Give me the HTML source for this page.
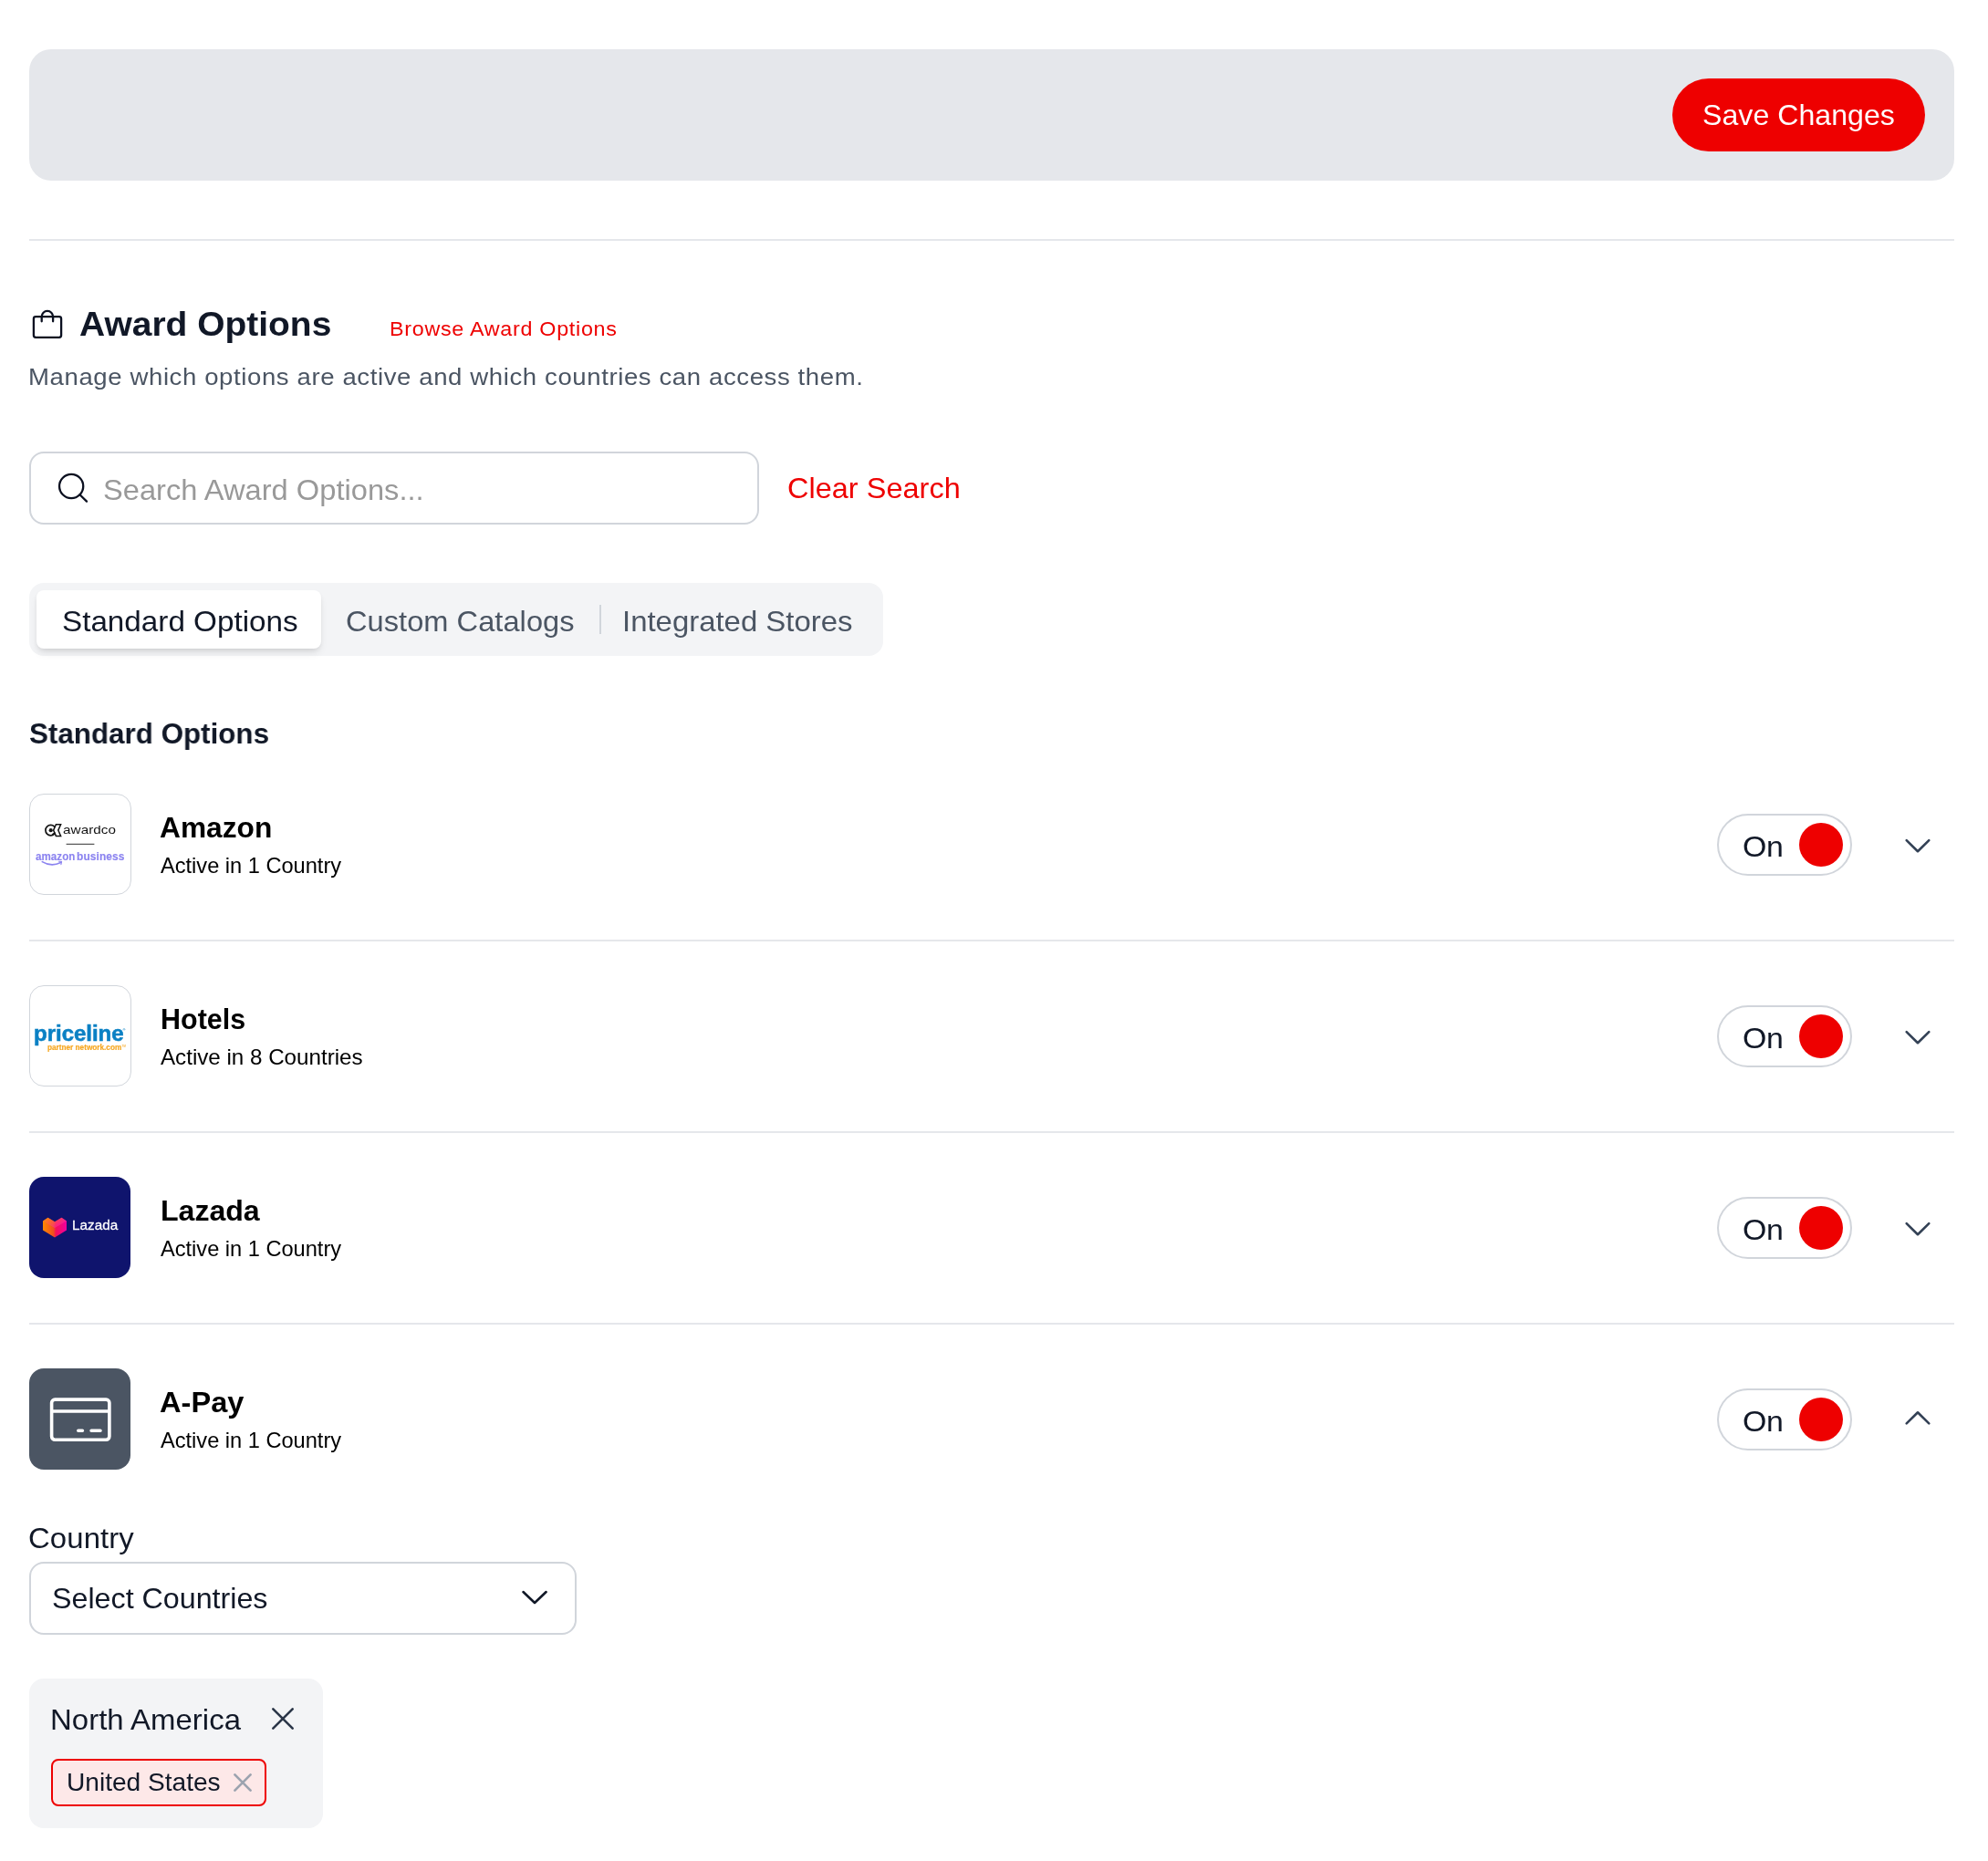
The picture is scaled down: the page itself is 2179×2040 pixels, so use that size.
<!DOCTYPE html>
<html lang="en">
<head>
<meta charset="utf-8">
<title>Award Options</title>
<style>
*{box-sizing:border-box;margin:0;padding:0}
html,body{width:2179px;height:2040px;background:#fff}
body{position:relative;font-family:"Liberation Sans",sans-serif;color:#111827}
.abs{position:absolute}
.t{position:absolute;white-space:pre;display:block;transform-origin:0 0}
.banner{position:absolute;left:32px;top:54px;width:2110px;height:144px;background:#e5e7eb;border-radius:24px}
.savebtn{position:absolute;left:1833px;top:86px;width:277px;height:80px;background:#ee0000;border-radius:40px}
.hr{position:absolute;left:32px;width:2110px;height:2px;background:#e5e7eb}
.search{position:absolute;left:32px;top:495px;width:800px;height:80px;border:2px solid #d1d5db;border-radius:16px;background:#fff}
.tabs{position:absolute;left:32px;top:639px;width:936px;height:80px;background:#f3f4f6;border-radius:16px}
.tab-active{position:absolute;left:40px;top:647px;width:312px;height:64px;background:#fff;border-radius:8px;box-shadow:0 6px 10px -2px rgba(0,0,0,.10),0 2px 5px -1px rgba(0,0,0,.08)}
.tabsep{position:absolute;left:657px;top:663px;width:2px;height:32px;background:#d1d5db}
.tile{position:absolute;left:32px;width:112px;height:111px;border-radius:16px;overflow:hidden}
.tile.b{border:1px solid #d1d5db;background:#fff}
.toggle{position:absolute;left:1882px;width:148px;height:68px;border:2px solid #d1d5db;border-radius:34px;background:#fff}
.knob{position:absolute;left:1972px;width:48px;height:48px;border-radius:50%;background:#ee0000}
.select{position:absolute;left:32px;top:1712px;width:600px;height:80px;border:2px solid #d1d5db;border-radius:16px;background:#fff}
.region{position:absolute;left:32px;top:1840px;width:322px;height:164px;background:#f3f4f6;border-radius:16px}
.chip{position:absolute;left:56px;top:1928px;width:236px;height:52px;background:#fde8e8;border:2px solid #ee0000;border-radius:8px}
#page{position:absolute;left:0;top:0;width:2179px;height:2040px;will-change:transform}
svg{position:absolute;overflow:visible}
#save{left:1865.65px;top:110px;font-size:32px;line-height:32px;font-weight:400;color:#ffffff;letter-spacing:0.026px;transform:scaleX(1.0032)}
#h1{left:86.82px;top:337px;font-size:37px;line-height:37px;font-weight:700;color:#111827;letter-spacing:0.007px;transform:scaleX(1.0524)}
#browse{left:426.65px;top:350px;font-size:22px;line-height:22px;font-weight:400;color:#ee0000;letter-spacing:0.668px;transform:scaleX(1.0600)}
#desc{left:30.59px;top:400px;font-size:26px;line-height:26px;font-weight:400;color:#4b5563;letter-spacing:0.566px;transform:scaleX(1.0600)}
#ph{left:112.65px;top:521px;font-size:32px;line-height:32px;font-weight:400;color:#999999;letter-spacing:0.013px;transform:scaleX(1.0199)}
#clear{left:862.65px;top:519px;font-size:32px;line-height:32px;font-weight:400;color:#ee0000;letter-spacing:0.041px;transform:scaleX(1.0136)}
#tab1{left:67.60px;top:665px;font-size:32px;line-height:32px;font-weight:400;color:#111827;letter-spacing:-0.004px;transform:scaleX(1.0386)}
#tab2{left:378.65px;top:665px;font-size:32px;line-height:32px;font-weight:400;color:#4b5563;letter-spacing:0.031px;transform:scaleX(1.0189)}
#tab3{left:681.70px;top:665px;font-size:32px;line-height:32px;font-weight:400;color:#4b5563;letter-spacing:-0.024px;transform:scaleX(1.0303)}
#h2{left:31.71px;top:788px;font-size:32px;line-height:32px;font-weight:700;color:#111827;letter-spacing:-0.018px;transform:scaleX(0.9807)}
#n1{left:174.60px;top:891px;font-size:32px;line-height:32px;font-weight:700;color:#000000;letter-spacing:0.010px;transform:scaleX(0.9906)}
#s1{left:175.75px;top:937px;font-size:24px;line-height:24px;font-weight:400;color:#000000;letter-spacing:-0.013px;transform:scaleX(0.9845)}
#n2{left:175.55px;top:1101px;font-size:32px;line-height:32px;font-weight:700;color:#000000;letter-spacing:0.028px;transform:scaleX(0.9513)}
#s2{left:175.72px;top:1147px;font-size:24px;line-height:24px;font-weight:400;color:#000000;letter-spacing:-0.016px;transform:scaleX(1.0082)}
#n3{left:175.57px;top:1311px;font-size:32px;line-height:32px;font-weight:700;color:#000000;letter-spacing:-0.049px;transform:scaleX(1.0038)}
#s3{left:175.75px;top:1357px;font-size:24px;line-height:24px;font-weight:400;color:#000000;letter-spacing:-0.013px;transform:scaleX(0.9845)}
#n4{left:174.60px;top:1521px;font-size:32px;line-height:32px;font-weight:700;color:#000000;letter-spacing:0.000px;transform:scaleX(1.0189)}
#s4{left:175.75px;top:1567px;font-size:24px;line-height:24px;font-weight:400;color:#000000;letter-spacing:-0.013px;transform:scaleX(0.9845)}
#on1{left:1909.62px;top:912px;font-size:32px;line-height:32px;font-weight:400;color:#111827;letter-spacing:-0.336px;transform:scaleX(1.0600)}
#on2{left:1909.62px;top:1122px;font-size:32px;line-height:32px;font-weight:400;color:#111827;letter-spacing:-0.336px;transform:scaleX(1.0600)}
#on3{left:1909.62px;top:1332px;font-size:32px;line-height:32px;font-weight:400;color:#111827;letter-spacing:-0.336px;transform:scaleX(1.0600)}
#on4{left:1909.62px;top:1542px;font-size:32px;line-height:32px;font-weight:400;color:#111827;letter-spacing:-0.336px;transform:scaleX(1.0600)}
#country{left:30.70px;top:1670px;font-size:32px;line-height:32px;font-weight:400;color:#111827;letter-spacing:0.092px;transform:scaleX(1.0283)}
#sel{left:56.55px;top:1736px;font-size:32px;line-height:32px;font-weight:400;color:#111827;letter-spacing:-0.005px;transform:scaleX(1.0076)}
#na{left:54.50px;top:1869px;font-size:32px;line-height:32px;font-weight:400;color:#111827;letter-spacing:0.033px;transform:scaleX(1.0286)}
#us{left:72.56px;top:1940px;font-size:28px;line-height:28px;font-weight:400;color:#111827;letter-spacing:-0.006px;transform:scaleX(1.0036)}
#lgaw{left:68.58px;top:903px;font-size:13.5px;line-height:13.5px;font-weight:400;color:#111111;letter-spacing:0.066px;transform:scaleX(1.1286)}
#lgam{left:38.72px;top:932px;font-size:13.4px;line-height:13.4px;font-weight:700;color:#8c84f0;letter-spacing:0.055px;transform:scaleX(0.8653)}
#lgbz{left:83.73px;top:932px;font-size:13.4px;line-height:13.4px;font-weight:700;color:#8c84f0;letter-spacing:0.095px;transform:scaleX(0.8921)}
#lgpl{left:36.53px;top:1122px;font-size:23px;line-height:23px;font-weight:700;color:#0a80c4;letter-spacing:-0.018px;transform:scaleX(1.0440)}
#lgpn{left:51.56px;top:1144px;font-size:8.5px;line-height:8.5px;font-weight:700;color:#f6a823;letter-spacing:-0.009px;transform:scaleX(0.9681)}
#lglz{left:78.63px;top:1335px;font-size:15.2px;line-height:15.2px;font-weight:400;color:#ffffff;letter-spacing:0.057px;transform:scaleX(1.0026)}
#lgpl{-webkit-text-stroke:.55px #0a80c4}
#lgpn{-webkit-text-stroke:.2px #f6a823}
#lgam,#lgbz{-webkit-text-stroke:.15px #8c84f0}
#lglz{-webkit-text-stroke:.3px #fff}

</style>
</head>
<body>
<div id="page">
<!-- sticky save banner -->
<div class="banner"></div>
<div class="savebtn"></div><span class="t" id="save">Save Changes</span>
<div class="hr" style="top:262px"></div>

<!-- heading -->
<svg style="left:34px;top:338px" width="36" height="34" viewBox="34 338 36 34" fill="none" stroke="#0b1020" stroke-width="2.3" stroke-linejoin="round" stroke-linecap="round">
  <rect x="36.9" y="347.2" width="30.2" height="22.6" rx="2.2"/>
  <path d="M45.7 352.3 V347.1 A6.2 6.2 0 0 1 58.1 347.1 V352.3"/>
</svg>
<span class="t" id="h1">Award Options</span>
<span class="t" id="browse">Browse Award Options</span>
<span class="t" id="desc">Manage which options are active and which countries can access them.</span>

<!-- search -->
<div class="search"></div>
<svg style="left:62px;top:518px" width="36" height="36" viewBox="62 518 36 36" fill="none" stroke="#0b1020" stroke-width="2.3" stroke-linecap="round">
  <circle cx="78.15" cy="533" r="13.1"/><path d="M87.5 542.3 L95 549.6"/>
</svg>
<span class="t" id="ph">Search Award Options...</span>
<span class="t" id="clear">Clear Search</span>

<!-- tabs -->
<div class="tabs"></div>
<div class="tab-active"></div>
<div class="tabsep"></div>
<span class="t" id="tab1">Standard Options</span>
<span class="t" id="tab2">Custom Catalogs</span>
<span class="t" id="tab3">Integrated Stores</span>

<span class="t" id="h2">Standard Options</span>

<!-- ROWS -->
<!-- row 1 -->
<div class="tile b" style="top:870px"></div>
 <svg style="left:44px;top:896px" width="90" height="60" viewBox="44 896 90 60" fill="none">
  <circle cx="55.6" cy="910.1" r="5.7" stroke="#141414" stroke-width="1.7"/>
  <path d="M61.4 903.8 H66.6 L63.8 910.1 L66.6 916.4 H61.4 L58.6 910.1 Z" fill="#fff" stroke="#141414" stroke-width="1.5" stroke-linejoin="miter"/>
  <path d="M57.3 914.9 L60.4 912.6" stroke="#141414" stroke-width="1.5"/>
  <circle cx="55.7" cy="910.2" r="2.1" fill="#141414"/>
  <path d="M72.6 925.4 H103.4" stroke="#5a5a5a" stroke-width="1.3"/>
  <path d="M46.3 944.6 Q56 950.6 66.6 945.6" stroke="#8c84f0" stroke-width="1.7" stroke-linecap="round"/>
  <path d="M64.6 944.3 L67.6 944.5 L66.9 947.6" stroke="#8c84f0" stroke-width="1.1" stroke-linecap="round" stroke-linejoin="round"/>
 </svg>
<span class="t" id="lgaw">awardco</span>
<span class="t" id="lgam">amazon</span>
<span class="t" id="lgbz">business</span>
<span class="t" id="n1">Amazon</span>
<span class="t" id="s1">Active in 1 Country</span>
<div class="toggle" style="top:892px"></div><div class="knob" style="top:902px"></div>
<span class="t" id="on1">On</span>
<svg style="left:2088px;top:920px" width="28" height="15" viewBox="0 0 28 15" fill="none" stroke="#334155" stroke-width="2.6" stroke-linecap="round" stroke-linejoin="round"><path d="M1.7 1.1 L14 13.2 L26.3 1.1"/></svg>
<div class="hr" style="top:1030px"></div>
<!-- row 2 -->
<div class="tile b" style="top:1080px"></div>
 <span class="t" style="left:134.6px;top:1126px;font-size:4px;line-height:5px;color:#0a80c4;font-weight:700">&#174;</span>
 <span class="t" style="left:133.8px;top:1145.4px;font-size:2.8px;line-height:4px;color:#f6a823;font-weight:700;opacity:.85">TM</span>
<span class="t" id="lgpl">priceline</span>
<span class="t" id="lgpn">partner network.com</span>
<span class="t" id="n2">Hotels</span>
<span class="t" id="s2">Active in 8 Countries</span>
<div class="toggle" style="top:1102px"></div><div class="knob" style="top:1112px"></div>
<span class="t" id="on2">On</span>
<svg style="left:2088px;top:1130px" width="28" height="15" viewBox="0 0 28 15" fill="none" stroke="#334155" stroke-width="2.6" stroke-linecap="round" stroke-linejoin="round"><path d="M1.7 1.1 L14 13.2 L26.3 1.1"/></svg>
<div class="hr" style="top:1240px"></div>
<!-- row 3 -->
<div class="tile" style="top:1290px;width:111px;background:#0f146d">
  <svg style="left:14px;top:44px" width="28" height="23" viewBox="0 0 28 23">
   <defs><linearGradient id="lz" x1="0" y1="0" x2="1" y2="0"><stop offset="0" stop-color="#ff8a00"/><stop offset=".45" stop-color="#f0501e"/><stop offset=".55" stop-color="#f5105a"/><stop offset="1" stop-color="#f000a0"/></linearGradient>
   <linearGradient id="lz2" x1="0" y1="0" x2="1" y2="1"><stop offset="0" stop-color="#ff9a00"/><stop offset="1" stop-color="#ff00e0"/></linearGradient></defs>
   <path d="M1 4.5 L6.5 0.8 L14 5.2 L21.5 0.8 L27 4.5 V14.5 L14 22.5 L1 14.5 Z" fill="url(#lz)"/>
   <path d="M1 4.5 L6.5 0.8 L14 5.2 L21.5 0.8 L27 4.5 L14 12 Z" fill="url(#lz2)" opacity=".55"/>
  </svg>
 </div>
<span class="t" id="lglz">Lazada</span>
<span class="t" id="n3">Lazada</span>
<span class="t" id="s3">Active in 1 Country</span>
<div class="toggle" style="top:1312px"></div><div class="knob" style="top:1322px"></div>
<span class="t" id="on3">On</span>
<svg style="left:2088px;top:1340px" width="28" height="15" viewBox="0 0 28 15" fill="none" stroke="#334155" stroke-width="2.6" stroke-linecap="round" stroke-linejoin="round"><path d="M1.7 1.1 L14 13.2 L26.3 1.1"/></svg>
<div class="hr" style="top:1450px"></div>
<!-- row 4 -->
<div class="tile" style="top:1500px;width:111px;background:#4b5563">
  <svg style="left:23px;top:32px" width="67" height="48" viewBox="0 0 67 48" fill="none" stroke="#fff" stroke-width="3.6" stroke-linecap="round" stroke-linejoin="round"><rect x="1.6" y="2.1" width="63.3" height="44.1" rx="3.6"/><path d="M1.6 15 H64.9" stroke-linecap="butt"/><path d="M30.8 36.3 H35.4 M45.1 36.3 H55"/></svg>
 </div>
<span class="t" id="n4">A-Pay</span>
<span class="t" id="s4">Active in 1 Country</span>
<div class="toggle" style="top:1522px"></div><div class="knob" style="top:1532px"></div>
<span class="t" id="on4">On</span>
<svg style="left:2088px;top:1547px" width="28" height="15" viewBox="0 0 28 15" fill="none" stroke="#334155" stroke-width="2.6" stroke-linecap="round" stroke-linejoin="round"><path d="M1.7 13.4 L14 1.3 L26.3 13.4"/></svg>

<!-- country picker -->
<span class="t" id="country">Country</span>
<div class="select"></div>
<span class="t" id="sel">Select Countries</span>
<svg style="left:573px;top:1744px" width="27" height="16" viewBox="0 0 27 16" fill="none" stroke="#111827" stroke-width="2.6" stroke-linecap="round" stroke-linejoin="round"><path d="M0.5 1.05 L13.05 13 L25.6 1.05"/></svg>

<div class="region"></div>
<span class="t" id="na">North America</span>
<svg style="left:298px;top:1872px" width="24" height="24" viewBox="0 0 24 24" fill="none" stroke="#2b3648" stroke-width="2.6" stroke-linecap="round"><path d="M1.3 1.3 L22.7 22.7 M22.7 1.3 L1.3 22.7"/></svg>
<div class="chip"></div>
<span class="t" id="us">United States</span>
<svg style="left:256px;top:1944px" width="20" height="20" viewBox="0 0 20 20" fill="none" stroke="#9ca3af" stroke-width="2.7" stroke-linecap="round"><path d="M1.4 1.4 L18.6 18.6 M18.6 1.4 L1.4 18.6"/></svg>
</div>
</body>
</html>
